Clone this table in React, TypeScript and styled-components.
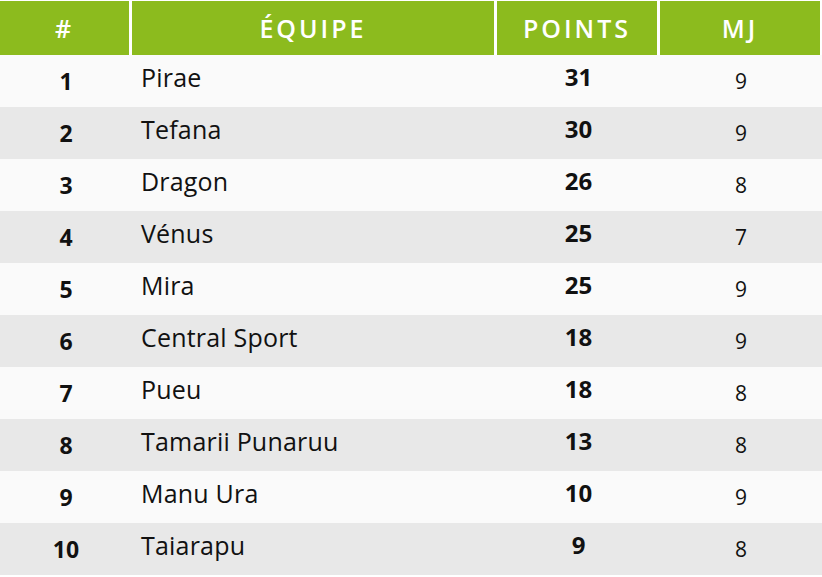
import { createGlobalStyle } from 'styled-components';
import styled from 'styled-components';

const GlobalStyle = createGlobalStyle`
  html, body {
    margin: 0;
    padding: 0;
    background: #ffffff;
  }
  body {
    font-family: 'Open Sans', 'Noto Sans', sans-serif;
  }
`;

const green = '#8cbb1e';

const Table = styled.table`
  width: 822px;
  border-collapse: separate;
  border-spacing: 0;
  table-layout: fixed;
`;

const HeadRow = styled.tr`
  height: 55px;
`;

const HeadCell = styled.th<{ $w: number; $last?: boolean }>`
  box-sizing: border-box;
  width: ${p => p.$w}px;
  padding: 0;
  background: ${green};
  color: #ffffff;
  font-size: 25px;
  font-weight: 600;
  letter-spacing: 3px;
  text-align: center;
  border-top: 1px solid #ffffff;
  border-right: ${p => (p.$last ? '2px' : '3px')} solid #ffffff;
`;

const BodyRow = styled.tr<{ $odd: boolean }>`
  height: 52px;
  background: ${p => (p.$odd ? '#e8e8e8' : '#fafafa')};
`;

const RankCell = styled.td`
  padding: 1px 0 0;
  text-align: center;
  font-size: 23px;
  font-weight: 700;
  line-height: 1;
  color: #111111;
`;

const TeamCell = styled.td`
  padding: 0 0 7px 9px;
  font-size: 25px;
  font-weight: 400;
  line-height: 1;
  letter-spacing: 0.2px;
  color: #111111;
`;

const PointsCell = styled.td`
  padding: 0 0 9px;
  text-align: center;
  font-size: 24px;
  font-weight: 700;
  line-height: 1;
  color: #111111;
`;

const PlayedCell = styled.td`
  padding: 1px 0 0;
  text-align: center;
  font-size: 21px;
  font-weight: 400;
  line-height: 1;
  color: #111111;
`;

const rows: [number, string, number, number][] = [
  [1, 'Pirae', 31, 9],
  [2, 'Tefana', 30, 9],
  [3, 'Dragon', 26, 8],
  [4, 'Vénus', 25, 7],
  [5, 'Mira', 25, 9],
  [6, 'Central Sport', 18, 9],
  [7, 'Pueu', 18, 8],
  [8, 'Tamarii Punaruu', 13, 8],
  [9, 'Manu Ura', 10, 9],
  [10, 'Taiarapu', 9, 8],
];

export default function App() {
  return (
    <>
      <GlobalStyle />
      <Table>
        <thead>
          <HeadRow>
            <HeadCell $w={132}>#</HeadCell>
            <HeadCell $w={365}>ÉQUIPE</HeadCell>
            <HeadCell $w={163}>POINTS</HeadCell>
            <HeadCell $w={162} $last>
              MJ
            </HeadCell>
          </HeadRow>
        </thead>
        <tbody>
          {rows.map(([rank, team, pts, mj], i) => (
            <BodyRow key={rank} $odd={i % 2 === 1}>
              <RankCell>{rank}</RankCell>
              <TeamCell>{team}</TeamCell>
              <PointsCell>{pts}</PointsCell>
              <PlayedCell>{mj}</PlayedCell>
            </BodyRow>
          ))}
        </tbody>
      </Table>
    </>
  );
}
